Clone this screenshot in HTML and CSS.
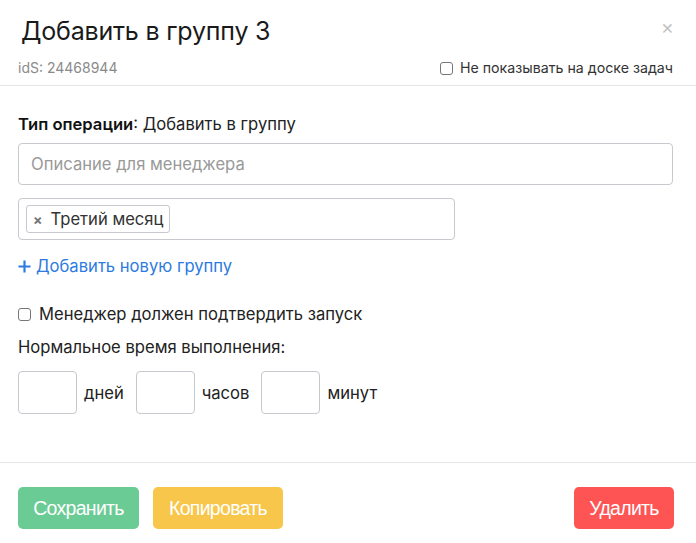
FILE: index.html
```html
<!DOCTYPE html>
<html lang="ru">
<head>
<meta charset="utf-8">
<link rel="stylesheet" href="styles.css">
</head>
<body>
<div class="modal">
  <div class="header">
    <div class="title-row">
      <h1 class="title">Добавить в группу 3</h1>
      <span class="close">×</span>
    </div>
    <div class="meta-row">
      <span class="ids">idS: 24468944</span>
      <label class="check small"><span class="box"></span>Не показывать на доске задач</label>
    </div>
  </div>
  <div class="body">
    <div class="optype"><b>Тип операции</b>: Добавить в группу</div>
    <div class="input wide"><span class="placeholder">Описание для менеджера</span></div>
    <div class="input tags"><span class="tag"><span class="tag-x">×</span>Третий месяц</span></div>
    <div class="add-link"><svg class="plus" width="13" height="13" viewBox="0 0 13 13"><path d="M6.5 0.5V12.5M0.5 6.5H12.5" stroke="#2d7be0" stroke-width="2.2" fill="none"/></svg>Добавить новую группу</div>
    <label class="check big"><span class="box"></span>Менеджер должен подтвердить запуск</label>
    <div class="label">Нормальное время выполнения:</div>
    <div class="time-row">
      <span class="tbox"></span><span class="unit">дней</span>
      <span class="tbox"></span><span class="unit">часов</span>
      <span class="tbox"></span><span class="unit">минут</span>
    </div>
  </div>
  <div class="footer">
    <button class="btn green">Сохранить</button>
    <button class="btn yellow">Копировать</button>
    <span class="spacer"></span>
    <button class="btn red">Удалить</button>
  </div>
</div>
</body>
</html>
```
FILE: styles.css
```css
* { box-sizing: border-box; }
html, body { margin: 0; padding: 0; background: #fff; }
body { font-family: Inter, "Noto Sans", sans-serif; color: #222; }
.modal { width: 696px; height: 543px; display: flex; flex-direction: column; }
.header { padding: 0 23px 0 18px; border-bottom: 1px solid #e6e6e6; height: 86px; }
.title-row { display: flex; justify-content: space-between; align-items: flex-start; padding-top: 14px; height: 48px; }
.title { margin: 0 0 0 3px; font-size: 25px; font-weight: 400; line-height: 34px; color: #1a1a1a; letter-spacing: -0.2px; }
.close { color: #c4c4c4; font-size: 20px; line-height: 20px; margin-top: 3px; margin-right: -1px; }
.meta-row { display: flex; justify-content: space-between; align-items: center; margin-top: 10px; line-height: 20px; }
.ids { font-size: 14px; color: #8a8a8a; }
.check { display: flex; align-items: center; cursor: pointer; }
.check .box { width: 13px; height: 13px; border: 1px solid #767676; border-radius: 3px; background: #fff; margin-right: 7px; flex: none; }
.check.small { font-size: 14.2px; color: #333; }
.body { padding: 0 23px 0 18px; flex: 1; border-bottom: 1px solid #e6e6e6; }
.optype { font-size: 16.6px; margin-top: 28px; line-height: 20px; color: #222; }
.optype b { font-weight: 600; color: #111; }
.input { border: 1px solid #c8c8cf; border-radius: 4px; height: 42px; display: flex; align-items: center; }
.wide { margin-top: 9px; padding-left: 12px; }
.placeholder { color: #999; font-size: 16.6px; }
.tags { width: 437px; margin-top: 13px; padding-left: 7px; }
.tag { border: 1px solid #c8c8cf; border-radius: 3px; height: 28px; display: inline-flex; align-items: center; padding: 0 6px 0 5px; font-size: 16.6px; color: #333; background: #fff; }
.tag-x { color: #777; font-weight: 700; font-size: 14px; margin-right: 8px; margin-left: 1px; }
.add-link { color: #2d7be0; font-size: 16.6px; margin-top: 15px; line-height: 22px; display: flex; align-items: center; }
.plus { margin-right: 5px; flex: none; }
.check.big { font-size: 16.6px; margin-top: 27px; line-height: 20px; color: #222; }
.check.big .box { margin-right: 8px; }
.label { font-size: 16.6px; margin-top: 13px; line-height: 20px; color: #222; }
.time-row { display: flex; align-items: center; margin-top: 14px; }
.tbox { width: 59px; height: 43px; border: 1px solid #c8c8cf; border-radius: 4px; }
.unit { font-size: 16.6px; margin: 0 12px 0 7px; color: #222; }
.footer { height: 80px; display: flex; align-items: flex-start; padding: 24px 22px 0 18px; gap: 14px; }
.spacer { flex: 1; }
.btn { border: 0; border-radius: 5px; height: 42px; color: #fff; font-family: "Liberation Sans", Arial, sans-serif; font-size: 19.5px; padding: 0; letter-spacing: -0.7px; }
.green { background: #6bcb95; width: 121px; }
.yellow { background: #f7c64a; width: 130px; }
.red { background: #fe5454; width: 100px; }
```
